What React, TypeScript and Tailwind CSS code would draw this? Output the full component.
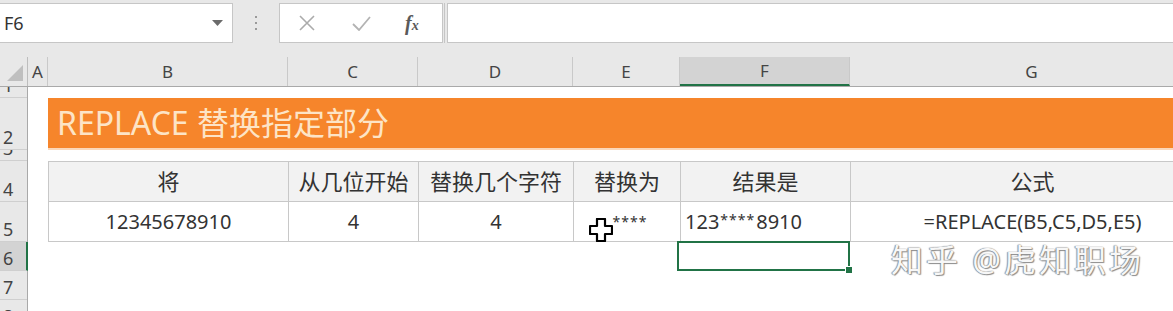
import React from 'react';

const COLS: Array<{ key: string; w: string }> = [
  { key: 'A', w: 'w-[20px]' },
  { key: 'B', w: 'w-[240px]' },
  { key: 'C', w: 'w-[130px]' },
  { key: 'D', w: 'w-[155px]' },
  { key: 'E', w: 'w-[107px]' },
  { key: 'F', w: 'w-[170px]' },
  { key: 'G', w: 'w-[364px]' },
];

const ROWS: Array<{ n: number; h: string }> = [
  { n: 1, h: 'h-[11px]' },
  { n: 2, h: 'h-[52px]' },
  { n: 3, h: 'h-[11px]' },
  { n: 4, h: 'h-[41px]' },
  { n: 5, h: 'h-[40px]' },
  { n: 6, h: 'h-[29px]' },
  { n: 7, h: 'h-[29px]' },
  { n: 8, h: 'h-[29px]' },
];

function TopBar() {
  return (
    <div className="h-[57px] bg-[#e8e8e8] flex items-start pt-[3px] shrink-0">
      {/* name box */}
      <div className="w-[233px] h-[40px] bg-white border border-[#c6c6c6] border-l-0 flex items-center pl-[4px] pr-[9px]">
        <span className="text-[18px] text-[#333]">F6</span>
        <svg width="11" height="6" viewBox="0 0 11 6" className="ml-auto">
          <polygon points="0,0 11,0 5.5,6" fill="#6b6b6b" />
        </svg>
      </div>
      <div className="w-[46px] h-[40px] flex flex-col items-center justify-center gap-[4px]">
        <span className="w-[2px] h-[2px] bg-[#9a9a9a]" />
        <span className="w-[2px] h-[2px] bg-[#9a9a9a]" />
        <span className="w-[2px] h-[2px] bg-[#9a9a9a]" />
      </div>
      {/* cancel / enter / fx */}
      <div className="w-[164px] h-[40px] bg-white border border-[#c6c6c6] flex items-center">
        <svg width="16" height="16" viewBox="0 0 16 16" className="ml-[19px]">
          <path d="M1 1 L15 15 M15 1 L1 15" stroke="#ababab" strokeWidth="1.6" />
        </svg>
        <svg width="19" height="15" viewBox="0 0 19 15" className="ml-[37px]">
          <path d="M1 8 L7 14 L18 1" stroke="#b3b3b3" strokeWidth="1.8" fill="none" />
        </svg>
        <span className="ml-[34px] text-[#5a5a5a] italic font-['Liberation_Serif',serif] leading-none">
          <span className="text-[20px] font-bold">f</span>
          <span className="text-[14px] font-bold">x</span>
        </span>
      </div>
      <div className="w-[2px] h-[40px] border-l border-[#c6c6c6] ml-[1px]" />
      <div className="flex-1 h-[40px] bg-white border border-[#c6c6c6] border-r-0 ml-[1px]" />
    </div>
  );
}

function ColHeader() {
  return (
    <div className="h-[30px] flex shrink-0 bg-[#e8e8e8] border-b border-[#a9a9a9]">
      <div className="w-[28px] shrink-0 border-r border-[#bdbdbd] flex items-end justify-end pr-[4px] pb-[5px]">
        <svg width="16" height="16" viewBox="0 0 16 16">
          <polygon points="16,0 16,16 0,16" fill="#bfbfbf" />
        </svg>
      </div>
      {COLS.map((c) => (
        <div
          key={c.key}
          className={`${c.w} shrink-0 flex items-center justify-center text-[17px] text-[#444] border-r border-[#c9c9c9] ${
            c.key === 'F' ? 'bg-[#d3d3d3] border-b-2 border-b-[#217346]' : ''
          }`}
        >
          {c.key}
        </div>
      ))}
    </div>
  );
}

function RowHeaders() {
  return (
    <div className="w-[28px] shrink-0 flex flex-col bg-[#e8e8e8] border-r border-[#a9a9a9]">
      {ROWS.map((r) => (
        <div
          key={r.n}
          className={`${r.h} shrink-0 overflow-hidden flex items-end pl-[3px] pb-[2px] text-[18px] leading-[20px] text-[#444] border-b border-[#cfcfcf] ${
            r.n === 6 ? 'bg-[#d3d3d3] border-r-2 border-r-[#217346] -mr-[1px]' : ''
          }`}
        >
          {r.n}
        </div>
      ))}
    </div>
  );
}

function Cell({ w, children, align = 'center', head = false }: { w: string; children?: React.ReactNode; align?: 'center' | 'left'; head?: boolean }) {
  return (
    <div
      className={`${w} shrink-0 h-full flex items-center border-r border-[#c8c8c8] text-[#333] ${
        align === 'center' ? 'justify-center' : 'justify-start pl-[4px]'
      } ${head ? 'bg-[#f2f2f2] text-[22px]' : 'bg-white text-[20px]'}`}
    >
      {children}
    </div>
  );
}

function Stars() {
  return <span className="text-[14px] tracking-[1px] relative -top-[2px] px-[1px]">****</span>;
}

function Sheet() {
  return (
    <div className="flex-1 flex flex-col relative bg-white">
      <div className="h-[11px] shrink-0" />
      {/* title banner */}
      <div className="h-[52px] shrink-0 pl-[20px] flex flex-col">
        <div className="h-[50px] bg-[#f6852b] flex items-center pl-[9px]">
          <span className="text-[32px] text-[#fde4c6] leading-none">REPLACE 替换指定部分</span>
        </div>
        <div className="h-[2px] bg-[#fbd7b9]" />
      </div>
      <div className="h-[11px] shrink-0" />
      {/* table header */}
      <div className="h-[41px] shrink-0 flex pl-[20px]">
        <div className="flex border-t border-l border-b border-[#c8c8c8]">
          <Cell w="w-[240px]" head>将</Cell>
          <Cell w="w-[130px]" head>从几位开始</Cell>
          <Cell w="w-[155px]" head>替换几个字符</Cell>
          <Cell w="w-[107px]" head>替换为</Cell>
          <Cell w="w-[170px]" head>结果是</Cell>
          <Cell w="w-[364px]" head>公式</Cell>
        </div>
      </div>
      {/* data row */}
      <div className="h-[40px] shrink-0 flex pl-[20px]">
        <div className="flex border-l border-b border-[#c8c8c8]">
          <Cell w="w-[240px]">12345678910</Cell>
          <Cell w="w-[130px]">4</Cell>
          <Cell w="w-[155px]">4</Cell>
          <Cell w="w-[107px]">
            <span className="pl-[6px]">
              <Stars />
            </span>
          </Cell>
          <Cell w="w-[170px]" align="left">
            123<Stars />8910
          </Cell>
          <Cell w="w-[364px]">=REPLACE(B5,C5,D5,E5)</Cell>
        </div>
      </div>
      {/* row 6 with selection */}
      <div className="h-[29px] shrink-0 flex">
        <div className="ml-[649px] w-[173px] h-[30px] -mt-[1px] border-2 border-[#217346] relative">
          <div className="absolute -right-[5px] -bottom-[5px] w-[8px] h-[8px] bg-[#217346] border border-white" />
        </div>
      </div>
      <div className="flex-1" />

      {/* mouse cursor over E5 */}
      <svg width="24" height="24" viewBox="0 0 24 24" className="absolute left-[561px] top-[131px]">
        <path d="M8 1 H16 V8 H23 V16 H16 V23 H8 V16 H1 V8 H8 Z" fill="#fff" stroke="#000" strokeWidth="2.2" strokeLinejoin="round" />
      </svg>

      {/* watermark */}
      <div className="absolute left-[863px] top-[157px] text-[32px] leading-none text-[#f7f7f7] tracking-[3px] [text-shadow:0_0_1px_#6f6f6f,1px_1px_1px_#8f8f8f,-1px_0_1px_#a0a0a0]">
        知乎 @虎知职场
      </div>
    </div>
  );
}

export default function App() {
  return (
    <div className="w-[1173px] h-[311px] overflow-hidden flex flex-col bg-white font-['Noto_Sans','Noto_Sans_CJK_SC',sans-serif]">
      <TopBar />
      <ColHeader />
      <div className="flex flex-1 min-h-0">
        <RowHeaders />
        <Sheet />
      </div>
    </div>
  );
}
